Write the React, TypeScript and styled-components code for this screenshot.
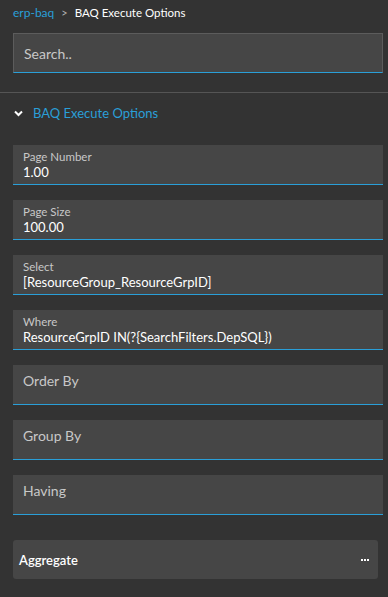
import React from 'react';
import styled, { createGlobalStyle } from 'styled-components';

const GlobalStyle = createGlobalStyle`
  html, body {
    margin: 0;
    padding: 0;
    background: #333333;
  }
  body {
    font-family: Lato, "Open Sans", sans-serif;
    color: #ffffff;
  }
`;

const Page = styled.div`
  width: 388px;
  height: 597px;
  background: #333333;
  overflow: hidden;
`;

const Breadcrumb = styled.div`
  display: flex;
  align-items: center;
  height: 24px;
  padding: 0 13px;
  font-size: 11.5px;
  gap: 7px;
`;

const Crumb = styled.span<{ $link?: boolean }>`
  color: ${(p) => (p.$link ? '#2a9fd8' : '#ffffff')};
  font-size: ${(p) => (p.$link ? '12px' : '11.5px')};
`;

const Sep = styled.span`
  color: #b0b0b0;
  font-size: 11px;
`;

const SearchWrap = styled.div`
  padding: 9px 5px 19px 13px;
  border-bottom: 1px solid #555555;
`;

const SearchInput = styled.div`
  height: 38px;
  background: #464646;
  border: 1px solid #5c5c5c;
  border-bottom: 1px solid #2a9fd8;
  display: flex;
  align-items: center;
  padding-left: 10px;
  font-size: 14px;
  color: #c8c8c8;
`;

const Section = styled.div`
  padding: 0 5px 0 13px;
`;

const SectionHeader = styled.div`
  display: flex;
  align-items: center;
  height: 40px;
  gap: 10px;
  padding-left: 1px;
  color: #2a9fd8;
  font-size: 13px;
`;

const Fields = styled.div`
  display: flex;
  flex-direction: column;
  gap: 15px;
  margin-top: 12px;
`;

const Field = styled.div<{ $empty?: boolean }>`
  box-sizing: border-box;
  height: 40px;
  background: #464646;
  border-bottom: 1px solid #2a9fd8;
  padding: ${(p) => (p.$empty ? '7px 10px 0' : '0 10px')};
  display: flex;
  flex-direction: column;
  justify-content: ${(p) => (p.$empty ? 'flex-start' : 'center')};
`;

const Label = styled.div<{ $big?: boolean }>`
  font-size: ${(p) => (p.$big ? '14px' : '11.5px')};
  color: #c8c8c8;
  line-height: ${(p) => (p.$big ? '18px' : '15px')};
`;

const Value = styled.div`
  font-size: 13px;
  color: #ffffff;
  line-height: 17px;
`;

const Aggregate = styled.div`
  box-sizing: border-box;
  margin: 25px 10px 0 13px;
  height: 39px;
  border-radius: 3px;
  background: #464646;
  display: flex;
  align-items: center;
  justify-content: space-between;
  padding: 0 9px 0 6px;
  font-size: 13px;
  font-weight: 600;
`;

const fields = [
  { label: 'Page Number', value: '1.00' },
  { label: 'Page Size', value: '100.00' },
  { label: 'Select', value: '[ResourceGroup_ResourceGrpID]' },
  { label: 'Where', value: 'ResourceGrpID IN(?{SearchFilters.DepSQL})' },
  { label: 'Order By' },
  { label: 'Group By' },
  { label: 'Having' },
];

export default function App() {
  return (
    <Page>
      <GlobalStyle />
      <Breadcrumb>
        <Crumb $link>erp-baq</Crumb>
        <Sep>&gt;</Sep>
        <Crumb>BAQ Execute Options</Crumb>
      </Breadcrumb>
      <SearchWrap>
        <SearchInput>Search..</SearchInput>
      </SearchWrap>
      <Section>
        <SectionHeader>
          <svg width="9" height="7" viewBox="0 0 9 7">
            <path d="M1 1.5 L4.5 5 L8 1.5" stroke="#ffffff" strokeWidth="2" fill="none" />
          </svg>
          BAQ Execute Options
        </SectionHeader>
        <Fields>
          {fields.map((f) =>
            f.value ? (
              <Field key={f.label}>
                <Label>{f.label}</Label>
                <Value>{f.value}</Value>
              </Field>
            ) : (
              <Field key={f.label} $empty>
                <Label $big>{f.label}</Label>
              </Field>
            )
          )}
        </Fields>
      </Section>
      <Aggregate>
        <span>Aggregate</span>
        <svg width="8" height="2" viewBox="0 0 8 2">
          <rect x="0" y="0" width="2" height="2" fill="#ffffff" />
          <rect x="3" y="0" width="2" height="2" fill="#ffffff" />
          <rect x="6" y="0" width="2" height="2" fill="#ffffff" />
        </svg>
      </Aggregate>
    </Page>
  );
}
